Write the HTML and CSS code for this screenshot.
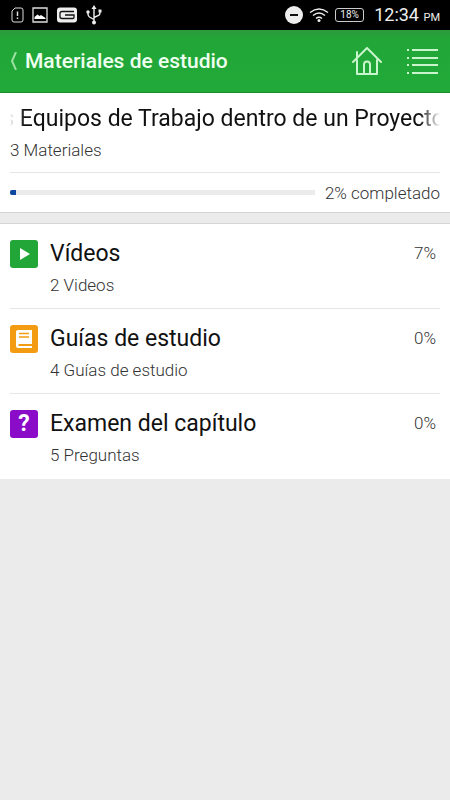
FILE: index.html
```html
<!DOCTYPE html>
<html lang="es">
<head>
  <meta charset="UTF-8">
  <meta name="viewport" content="width=device-width, initial-scale=1.0">
  <title>Materiales de estudio</title>
  <link rel="stylesheet" href="styles.css">
</head>
<body>
<div class="status-bar">
  <div class="status-group">
    <svg width="14" height="16" viewBox="0 0 14 16" fill="none" stroke="#ddd">
      <path d="M5 1h6a2 2 0 0 1 2 2v10a2 2 0 0 1-2 2H4a2 2 0 0 1-2-2V4z"/>
      <path d="M7.500 4.500v4.500M7.500 10.500v1.500" stroke-width="1.500"/>
    </svg>
    <svg width="16" height="16" viewBox="0 0 16 16">
      <path d="M1 1h14v14H1z" fill="none" stroke="#ddd" stroke-width="1.300"/>
      <path d="M2.500 12V10l3-2.500 2 1.500 1.500-1 4.500 3V12z" fill="#fff"/>
    </svg>
    <svg width="22" height="16" viewBox="0 0 22 16">
      <path d="M4 .5h14a3 3 0 0 1 3 3v9a3 3 0 0 1-3 3H4a3 3 0 0 1-3-3v-9a3 3 0 0 1 3-3z" fill="#eee"/>
      <path d="M18 4.500H6q-2 0-2 2v3q0 2 2 2h11q1 0 1-1V8H9" fill="none" stroke="#111" stroke-width="1.300"/>
    </svg>
    <svg width="16" height="20" viewBox="0 0 16 20" fill="none" stroke="#eee" stroke-width="1.400">
      <path d="M8 3v14M8 14.500l-4.500-2.500Q2 11 2 9V7M8 12.500l4.500-2Q14 9.500 14 7.500V6"/>
      <path d="M8 0l2.500 4h-5z" fill="#eee" stroke="none"/>
      <circle cx="8" cy="17.500" r="2" fill="#eee" stroke="none"/>
      <circle cx="2" cy="7" r="1.700" fill="#eee" stroke="none"/>
      <path d="M12.500 4.500h3v3h-3z" fill="#eee" stroke="none"/>
    </svg>
  </div>
  <div class="status-group status-right">
    <svg width="18" height="18" viewBox="0 0 18 18">
      <circle cx="9" cy="9" r="9" fill="#eee"/>
      <path d="M5 9h8" stroke="#111" stroke-width="2"/>
    </svg>
    <svg width="20" height="16" viewBox="0 0 20 16" fill="none" stroke="#eee" stroke-width="1.500">
      <path d="M1 5.500Q10-1.500 19 5.500M4 8.500q6-5 12 0M7 11.500q3-2.500 6 0"/>
      <circle cx="10" cy="13.500" r="1.500" fill="#eee" stroke="none"/>
    </svg>
    <span class="battery">18%</span>
    <span class="clock">12:34 <small>PM</small></span>
  </div>
</div>

<header class="app-bar">
  <a class="back" href="#">
    <svg width="10" height="18" viewBox="0 0 10 18" fill="none" stroke="#9be0a2" stroke-width="2">
      <path d="M8 0L4 9l4 9"/>
    </svg>
    <h1>Materiales de estudio</h1>
  </a>
  <nav class="actions">
    <button type="button" aria-label="Inicio">
      <svg width="30" height="28" viewBox="0 0 30 28" fill="none" stroke="#c9f5cc" stroke-width="2" stroke-linecap="round" stroke-linejoin="round">
        <path d="M1 15L15 1l14 14M5 10.500V5M5 13v14h20V13"/>
        <path d="M12 27V17.500a3 3 0 0 1 6 0V27"/>
      </svg>
    </button>
    <button type="button" aria-label="Menú">
      <svg width="32" height="28" viewBox="0 0 32 28" stroke="#c9f5cc" stroke-width="2">
        <path d="M1 3h2M6 3h26M1 11h2M6 11h26M1 18h2M6 18h26M1 26h2M6 26h26"/>
      </svg>
    </button>
  </nav>
</header>

<main>
  <section class="chapter">
    <div class="chapter-head">
      <h2 class="marquee"><span>s Equipos de Trabajo dentro de un Proyecto</span></h2>
      <p class="sub">3 Materiales</p>
    </div>
    <div class="progress">
      <div class="track"><div class="fill" style="width: 2%"></div></div>
      <span class="sub">2% completado</span>
    </div>
  </section>

  <ul class="materials">
    <li>
      <a href="#">
        <span class="icon icon-video">
          <svg width="28" height="28" viewBox="0 0 28 28"><path d="M10 8l10 6-10 6z" fill="#fff"/></svg>
        </span>
        <span class="text">
          <span class="name">Vídeos</span>
          <span class="sub">2 Videos</span>
        </span>
        <span class="percent">7%</span>
      </a>
    </li>
    <li>
      <a href="#">
        <span class="icon icon-guide">
          <svg width="28" height="28" viewBox="0 0 28 28">
            <path d="M8 5h14v14H8.500v2H22v2H8a2 2 0 0 1-2-2V7a2 2 0 0 1 2-2z" fill="#fff"/>
            <path d="M9 8.500h10M9 12h10" stroke="#f39c12" stroke-width="1.500"/>
          </svg>
        </span>
        <span class="text">
          <span class="name">Guías de estudio</span>
          <span class="sub">4 Guías de estudio</span>
        </span>
        <span class="percent">0%</span>
      </a>
    </li>
    <li>
      <a href="#">
        <span class="icon icon-exam">?</span>
        <span class="text">
          <span class="name">Examen del capítulo</span>
          <span class="sub">5 Preguntas</span>
        </span>
        <span class="percent">0%</span>
      </a>
    </li>
  </ul>
</main>
</body>
</html>
```
FILE: styles.css
```css
* {
  box-sizing: border-box;
}

body {
  font-family: Roboto, sans-serif;
  margin: 0;
  background-color: #ebebeb;
  color: #111;
}

h1, h2, p, ul {
  margin: 0;
  padding: 0;
}

a {
  color: inherit;
  text-decoration: none;
}

svg {
  display: block;
  flex: none;
}

.status-bar {
  display: flex;
  justify-content: space-between;
  align-items: center;
  height: 30px;
  padding: 0 10px;
  background-color: #000;
  color: #eee;
}

.status-group {
  display: flex;
  align-items: center;
  gap: 8px;
}

.status-right {
  gap: 6px;
}

.battery {
  width: 29px;
  border: 1px solid #ccc;
  border-radius: 3px;
  font-size: 10px;
  line-height: 12px;
  text-align: center;
}

.clock {
  margin-left: 4px;
  font-size: 18px;
  line-height: 30px;
  padding-top: 2px;
}

.clock small {
  font-size: 11px;
}

.app-bar {
  display: flex;
  justify-content: space-between;
  align-items: center;
  height: 63px;
  padding: 0 12px 0 8px;
  background: linear-gradient(#2b9a3c, #21a637 10px, #21aa39);
  border-bottom: 1px solid #178a2c;
}

.back {
  display: flex;
  align-items: center;
  gap: 7px;
}

.app-bar h1 {
  color: #effff0;
  font-size: 21px;
  font-weight: 500;
  line-height: 30px;
}

.actions {
  display: flex;
  gap: 24px;
}

.actions button {
  padding: 0;
  border: none;
  background: none;
  cursor: pointer;
}

.chapter {
  padding: 0 10px;
  background-color: #fff;
  border-bottom: 1px solid #d4d4d4;
}

.chapter-head {
  padding: 10px 0 7px;
  border-bottom: 1px solid #e6e6e6;
}

/* long titles run past both edges and fade out */
.marquee {
  display: flex;
  justify-content: center;
  overflow: hidden;
  padding-right: 3px;
  font-size: 23px;
  font-weight: 400;
  line-height: 32px;
  white-space: nowrap;
  -webkit-mask-image: linear-gradient(90deg, transparent, #000 14px, #000 calc(100% - 20px), transparent);
  mask-image: linear-gradient(90deg, transparent, #000 14px, #000 calc(100% - 20px), transparent);
}

.sub,
.percent {
  color: #333;
  font-size: 17px;
  font-weight: 300;
  line-height: 30px;
}

.progress {
  display: flex;
  align-items: center;
  gap: 10px;
  height: 39px;
}

.track {
  flex: 1;
  height: 5px;
  background-color: #ebebeb;
}

.fill {
  height: 100%;
  background-color: #0d47a1;
  border-radius: 2px 0 0 2px;
}

.materials {
  margin-top: 10px;
  padding: 0 10px;
  background-color: #fff;
  border-top: 1px solid #d4d4d4;
  list-style: none;
}

.materials li {
  border-bottom: 1px solid #e6e6e6;
}

.materials li:last-child {
  border-color: #fff;
}

.materials a {
  display: flex;
  align-items: flex-start;
  gap: 12px;
  height: 84px;
  padding: 14px 4px 0 0;
}

.icon {
  flex: none;
  width: 28px;
  height: 28px;
  margin-top: 2px;
  border-radius: 3px;
  color: #fff;
  font-size: 23px;
  font-weight: 700;
  line-height: 28px;
  text-align: center;
}

.icon-video {
  background-color: #21a637;
}

.icon-guide {
  background-color: #f39c12;
}

.icon-exam {
  background-color: #8a0cc8;
}

.text {
  display: flex;
  flex: 1;
  flex-direction: column;
}

.name {
  font-size: 23px;
  line-height: 32px;
}
```
